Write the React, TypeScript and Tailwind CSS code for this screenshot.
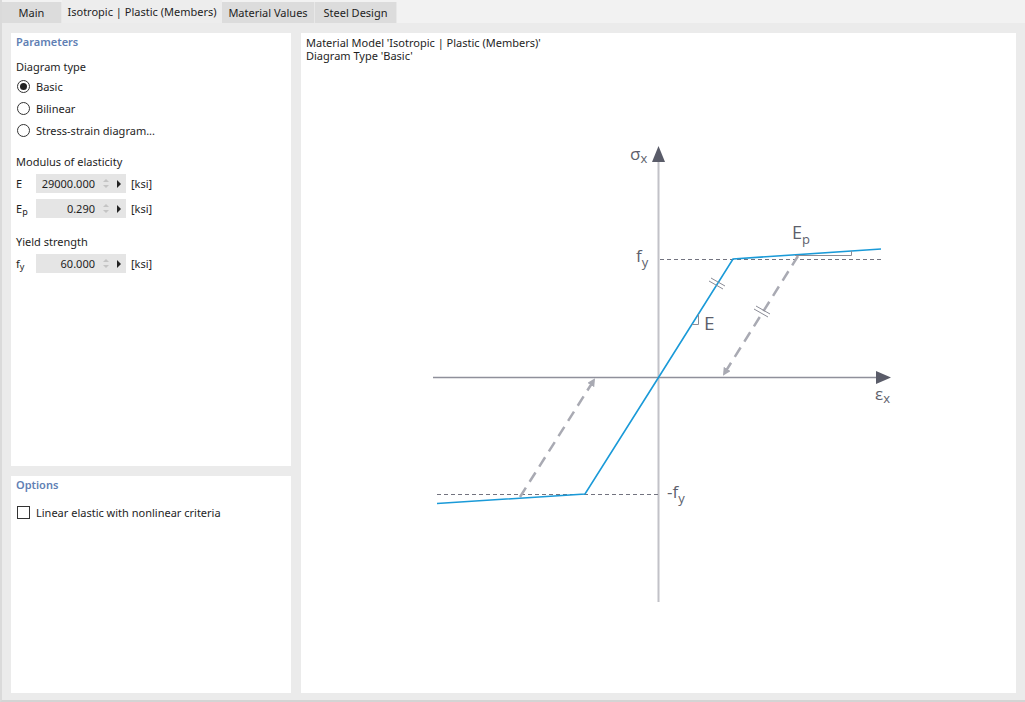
import type { ReactNode } from "react"

const tabs = [
  { name: "Main", w: "w-[60px]" },
  { name: "Isotropic | Plastic (Members)", w: "w-[160px]" },
  { name: "Material Values", w: "w-[93px]" },
  { name: "Steel Design", w: "w-[82px]" },
]

function Radio({ checked, label }: { checked?: boolean; label: string }) {
  return (
    <div className="flex items-center h-[22px]">
      <span className="w-[13px] h-[13px] rounded-full border border-[#333] flex items-center justify-center ml-[1px]">
        {checked && <span className="w-[7px] h-[7px] rounded-full bg-[#222]" />}
      </span>
      <span className="ml-[6px]">{label}</span>
    </div>
  )
}

function NumField({ label, value }: { label: ReactNode; value: string }) {
  return (
    <div className="flex items-center h-[25px]">
      <span className="w-[20px]">{label}</span>
      <div className="w-[90px] h-[19px] bg-[#e5e5e5] flex items-center">
        <span className="flex-1 text-right pr-[7px]">{value}</span>
        <span className="flex flex-col items-center justify-center w-[8px] gap-[3px]">
          <span className="w-0 h-0 border-x-[3px] border-x-transparent border-b-[3px] border-b-[#c4c4c4]" />
          <span className="w-0 h-0 border-x-[3px] border-x-transparent border-t-[3px] border-t-[#c4c4c4]" />
        </span>
        <span className="ml-[7px] mr-[5px] w-0 h-0 border-y-[4px] border-y-transparent border-l-[4px] border-l-[#222]" />
      </div>
      <span className="ml-[5px]">[ksi]</span>
    </div>
  )
}

function Diagram() {
  const label = "#5d5f6c"
  const font = "'Open Sans', 'Noto Sans', sans-serif"
  return (
    <svg width="715" height="660" className="absolute left-0 top-0">
      <defs>
        <marker id="gr" markerWidth="8" markerHeight="8" refX="6" refY="4" orient="auto" markerUnits="userSpaceOnUse">
          <path d="M0,0 L8,4 L0,8 Z" fill="#a9aab3" />
        </marker>
      </defs>
      <g transform="translate(-301,-33)">
        {/* axes */}
        <line x1="658.5" y1="160" x2="658.5" y2="602" stroke="#c2c2c8" strokeWidth="2" />
        <path d="M652,162 L658.5,146 L665,162 Z" fill="#5a5c69" />
        <line x1="433" y1="377.5" x2="878" y2="377.5" stroke="#8f909b" strokeWidth="1.5" />
        <path d="M876,371 L891,377.5 L876,384 Z" fill="#5a5c69" />

        {/* yield levels */}
        <line x1="660" y1="259.5" x2="881" y2="259.5" stroke="#72737f" strokeWidth="1" strokeDasharray="4 3" />
        <line x1="437" y1="494.5" x2="659" y2="494.5" stroke="#72737f" strokeWidth="1" strokeDasharray="4 3" />

        {/* unloading / reloading paths */}
        <line x1="798" y1="256" x2="724" y2="374" stroke="#a9aab3" strokeWidth="2.5" strokeDasharray="11 7" markerEnd="url(#gr)" />
        <line x1="520" y1="497" x2="594" y2="380" stroke="#a9aab3" strokeWidth="2.5" strokeDasharray="11 7" markerEnd="url(#gr)" />

        {/* stress-strain curve */}
        <polyline points="437,503.5 585,494 658.5,377.5 733,259 881,249" fill="none" stroke="#1a9ad8" strokeWidth="1.6" />

        {/* parallel ticks */}
        <line x1="709" y1="281" x2="723" y2="289" stroke="#8a8b95" strokeWidth="1" />
        <line x1="711" y1="278" x2="725" y2="286" stroke="#8a8b95" strokeWidth="1" />
        <line x1="754" y1="309" x2="768" y2="317" stroke="#8a8b95" strokeWidth="1" />
        <line x1="756" y1="306" x2="770" y2="314" stroke="#8a8b95" strokeWidth="1" />

        {/* slope markers */}
        <polyline points="692,324.5 698.5,324.5 698.5,314" fill="none" stroke="#8a8b95" strokeWidth="1" />
        <polyline points="795,255.5 851.5,255.5 851.5,251" fill="none" stroke="#8a8b95" strokeWidth="1" />

        {/* labels */}
        <text x="630" y="160" fontSize="17" fill={label} fontFamily={font}>
          σ<tspan fontSize="13" dy="3">x</tspan>
        </text>
        <text x="636" y="262" fontSize="17" fill={label} fontFamily={font}>
          f<tspan fontSize="13" dy="5">y</tspan>
        </text>
        <text x="704" y="330" fontSize="19" fill={label} fontFamily={font}>E</text>
        <text x="792" y="239" fontSize="18" fill={label} fontFamily={font}>
          E<tspan fontSize="13" dy="5">p</tspan>
        </text>
        <text x="875" y="400" fontSize="17" fill={label} fontFamily={font}>
          ε<tspan fontSize="13" dy="3">x</tspan>
        </text>
        <text x="667" y="498" fontSize="17" fill={label} fontFamily={font}>
          -f<tspan fontSize="13" dy="5">y</tspan>
        </text>
      </g>
    </svg>
  )
}

export default function App() {
  return (
    <div className="w-[1025px] h-[702px] bg-[#ebebeb] flex flex-col text-[11px] text-[#1e1e1e] font-['Noto_Sans',sans-serif] leading-none border-l-2 border-[#dadada] border-b-2 border-b-[#d4d4d4]">
      <div className="h-[23px] flex bg-[#f2f2f2]">
        {tabs.map((t, i) => (
          <div
            key={t.name}
            className={
              i === 1
                ? `${t.w} flex items-center justify-center whitespace-nowrap bg-[#ededed]`
                : `${t.w} flex items-center justify-center whitespace-nowrap bg-[#dcdcdc] border-r border-[#e8e8e8] mt-[2px]`
            }
          >
            {t.name}
          </div>
        ))}
      </div>

      <div className="flex-1 flex gap-[10px] pl-[9px] pr-[9px] pt-[10px] pb-[7px]">
        <div className="w-[280px] flex flex-col gap-[10px]">
          <div className="h-[433px] bg-white px-[5px]">
            <div className="font-semibold text-[#6180b4] h-[16px] flex items-center">Parameters</div>
            <div className="mt-[9px] h-[16px] flex items-center">Diagram type</div>
            <div className="mt-[1px]">
              <Radio checked label="Basic" />
              <Radio label="Bilinear" />
              <Radio label="Stress-strain diagram..." />
            </div>
            <div className="mt-[12px] h-[16px] flex items-center">Modulus of elasticity</div>
            <div className="mt-[2px]">
              <NumField label="E" value="29000.000" />
              <NumField
                label={
                  <>
                    E<sub className="text-[9px]">p</sub>
                  </>
                }
                value="0.290"
              />
            </div>
            <div className="mt-[12px] h-[16px] flex items-center">Yield strength</div>
            <div className="mt-[2px]">
              <NumField
                label={
                  <>
                    f<sub className="text-[9px]">y</sub>
                  </>
                }
                value="60.000"
              />
            </div>
          </div>

          <div className="flex-1 bg-white px-[5px]">
            <div className="font-semibold text-[#6180b4] h-[16px] flex items-center">Options</div>
            <div className="mt-[14px] flex items-center">
              <span className="w-[13px] h-[13px] border border-[#333] ml-[1px]" />
              <span className="ml-[6px]">Linear elastic with nonlinear criteria</span>
            </div>
          </div>
        </div>

        <div className="flex-1 bg-white relative">
          <Diagram />
          <div className="relative pl-[5px] pt-[3px] leading-[13px]">
            <div>Material Model 'Isotropic | Plastic (Members)'</div>
            <div>Diagram Type 'Basic'</div>
          </div>
        </div>
      </div>
    </div>
  )
}
